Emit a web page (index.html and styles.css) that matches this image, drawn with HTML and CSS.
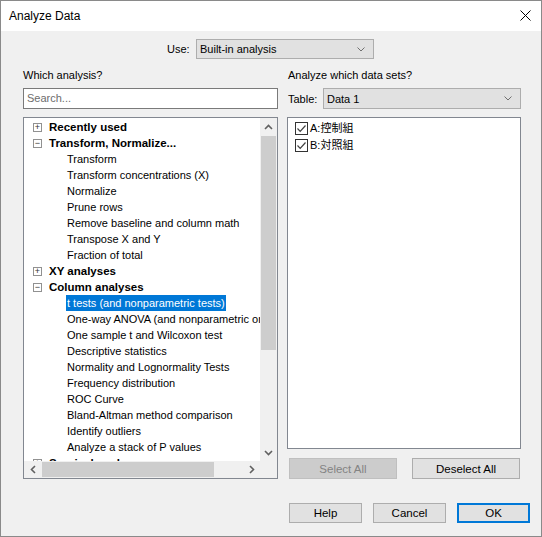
FILE: index.html
```html
<!DOCTYPE html>
<html>
<head>
<meta charset="utf-8">
<link rel="stylesheet" href="styles.css">
</head>
<body>
<div class="window">
  <div class="titlebar">
    <span class="title">Analyze Data</span>
    <svg class="close" width="11" height="11" viewBox="0 0 11 11"><path d="M0.5 0.5L10.5 10.5M10.5 0.5L0.5 10.5" stroke="#000" stroke-width="1"/></svg>
  </div>
  <div class="content">
    <div class="use-row">
      <span class="use-label">Use:</span>
      <div class="combo use-combo">
        <span>Built-in analysis</span>
        <svg class="chev" width="8" height="5" viewBox="0 0 8 5"><path d="M0.5 0.5L4 4L7.5 0.5" fill="none" stroke="#707070" stroke-width="1"/></svg>
      </div>
    </div>
    <div class="columns">
      <div class="col-left">
        <div class="label">Which analysis?</div>
        <div class="search">Search...</div>
        <div class="tree">
          <div class="tree-items">
            <div class="row head"><span class="exp">+</span>Recently used</div>
            <div class="row head"><span class="exp">−</span>Transform, Normalize...</div>
            <div class="row child"><span class="txt">Transform</span></div>
            <div class="row child"><span class="txt">Transform concentrations (X)</span></div>
            <div class="row child"><span class="txt">Normalize</span></div>
            <div class="row child"><span class="txt">Prune rows</span></div>
            <div class="row child"><span class="txt">Remove baseline and column math</span></div>
            <div class="row child"><span class="txt">Transpose X and Y</span></div>
            <div class="row child"><span class="txt">Fraction of total</span></div>
            <div class="row head"><span class="exp">+</span>XY analyses</div>
            <div class="row head"><span class="exp">−</span>Column analyses</div>
            <div class="row child"><span class="txt selected">t tests (and nonparametric tests)</span></div>
            <div class="row child"><span class="txt">One-way ANOVA (and nonparametric or mixed)</span></div>
            <div class="row child"><span class="txt">One sample t and Wilcoxon test</span></div>
            <div class="row child"><span class="txt">Descriptive statistics</span></div>
            <div class="row child"><span class="txt">Normality and Lognormality Tests</span></div>
            <div class="row child"><span class="txt">Frequency distribution</span></div>
            <div class="row child"><span class="txt">ROC Curve</span></div>
            <div class="row child"><span class="txt">Bland-Altman method comparison</span></div>
            <div class="row child"><span class="txt">Identify outliers</span></div>
            <div class="row child"><span class="txt">Analyze a stack of P values</span></div>
            <div class="row head"><span class="exp">+</span>Survival analyses</div>
          </div>
          <div class="vscroll">
            <div class="sbtn"><svg width="9" height="6" viewBox="0 0 9 6"><path d="M1 5L4.5 1.5L8 5" fill="none" stroke="#606060" stroke-width="1.6"/></svg></div>
            <div class="vtrack"><div class="vthumb"></div></div>
            <div class="sbtn"><svg width="9" height="6" viewBox="0 0 9 6"><path d="M1 1L4.5 4.5L8 1" fill="none" stroke="#606060" stroke-width="1.6"/></svg></div>
          </div>
          <div class="hscroll">
            <div class="sbtn"><svg width="6" height="9" viewBox="0 0 6 9"><path d="M5 1L1.5 4.5L5 8" fill="none" stroke="#606060" stroke-width="1.6"/></svg></div>
            <div class="htrack"><div class="hthumb"></div></div>
            <div class="sbtn"><svg width="6" height="9" viewBox="0 0 6 9"><path d="M1 1L4.5 4.5L1 8" fill="none" stroke="#606060" stroke-width="1.6"/></svg></div>
          </div>
          <div class="corner"></div>
        </div>
      </div>
      <div class="col-right">
        <div class="label rlabel">Analyze which data sets?</div>
        <div class="table-row">
          <span class="table-label">Table:</span>
          <div class="combo table-combo">
            <span>Data 1</span>
            <svg class="chev" width="8" height="5" viewBox="0 0 8 5"><path d="M0.5 0.5L4 4L7.5 0.5" fill="none" stroke="#707070" stroke-width="1"/></svg>
          </div>
        </div>
        <div class="list">
          <div class="check-row"><span class="cb"><svg width="11" height="11" viewBox="0 0 11 11"><path d="M1.5 5.5L4.2 8.3L9.5 2.5" fill="none" stroke="#404040" stroke-width="1.2"/></svg></span><span class="ctext">A:控制組</span></div>
          <div class="check-row"><span class="cb"><svg width="11" height="11" viewBox="0 0 11 11"><path d="M1.5 5.5L4.2 8.3L9.5 2.5" fill="none" stroke="#404040" stroke-width="1.2"/></svg></span><span class="ctext">B:対照組</span></div>
        </div>
        <div class="sel-buttons">
          <div class="btn disabled">Select All</div>
          <div class="btn">Deselect All</div>
        </div>
      </div>
    </div>
    <div class="footer">
      <div class="btn fbtn">Help</div>
      <div class="btn fbtn">Cancel</div>
      <div class="btn fbtn default">OK</div>
    </div>
  </div>
</div>
</body>
</html>
```
FILE: styles.css
```css
* { box-sizing: border-box; }
html, body { margin: 0; padding: 0; }
body {
  font-family: "Liberation Sans", Arial, sans-serif;
  font-size: 11px;
  color: #000;
  background: #f0f0f0;
}
.window {
  width: 542px;
  height: 537px;
  border: 1px solid #8a8a8a;
  background: #f0f0f0;
  display: flex;
  flex-direction: column;
}
.titlebar {
  height: 30px;
  background: #fff;
  display: flex;
  align-items: center;
  justify-content: space-between;
  padding: 0 10px 0 8px;
  flex-shrink: 0;
}
.title { font-size: 12px; }
.close { margin-top: -2px; }
.content {
  flex: 1;
  padding: 0 0 0 22px;
  display: flex;
  flex-direction: column;
}
.use-row {
  margin-top: 8px;
  padding-left: 144px;
  display: flex;
  align-items: center;
  height: 20px;
}
.use-label { width: 29px; }
.combo {
  background: #e1e1e1;
  border: 1px solid #adadad;
  display: flex;
  align-items: center;
  justify-content: space-between;
  padding: 0 8px 0 3px;
}
.use-combo { width: 178px; height: 20px; }
.columns {
  margin-top: 10px;
  display: flex;
  gap: 9px;
}
.col-left { width: 255px; display: flex; flex-direction: column; }
.col-right { width: 234px; display: flex; flex-direction: column; }
.label { height: 13px; line-height: 13px; }
.rlabel { padding-left: 1px; }
.search {
  margin-top: 6px;
  height: 21px;
  background: #fff;
  border: 1px solid #7a7a7a;
  padding-left: 3px;
  line-height: 19px;
  color: #6d6d6d;
}
.tree {
  margin-top: 8px;
  height: 362px;
  border: 1px solid #828790;
  background: #fff;
  display: grid;
  grid-template-columns: 1fr 17px;
  grid-template-rows: 1fr 17px;
}
.tree-items {
  overflow: hidden;
  padding-top: 1px;
  white-space: nowrap;
}
.row {
  height: 16px;
  line-height: 16px;
  display: flex;
  align-items: center;
}
.row.head { font-weight: bold; padding-left: 9px; font-size: 11.5px; }
.exp {
  width: 9px;
  height: 9px;
  border: 1px solid #919191;
  font-weight: normal;
  font-size: 9px;
  line-height: 7px;
  text-align: center;
  color: #333;
  margin-right: 7px;
  flex-shrink: 0;
  overflow: hidden;
}
.row.child { padding-left: 42px; }
.txt { padding: 0 1px; height: 16px; line-height: 16px; }
.txt.selected { background: #0078d7; color: #fff; }
.vscroll {
  background: #f0f0f0;
  display: flex;
  flex-direction: column;
}
.sbtn {
  width: 17px;
  height: 17px;
  display: flex;
  align-items: center;
  justify-content: center;
  flex-shrink: 0;
}
.vtrack { flex: 1; padding-top: 1px; }
.vthumb { height: 214px; background: #cdcdcd; margin: 0 1px; }
.hscroll {
  background: #f0f0f0;
  display: flex;
}
.htrack { flex: 1; padding: 1px 0; }
.hthumb { width: 172px; height: 15px; background: #cdcdcd; margin-left: 1px; }
.corner { background: #f0f0f0; }
.table-row {
  margin-top: 6px;
  display: flex;
  align-items: center;
  height: 21px;
}
.table-label { width: 36px; padding-left: 1px; }
.table-combo { flex: 1; height: 21px; }
.list {
  margin-top: 8px;
  height: 332px;
  background: #fff;
  border: 1px solid #828790;
  padding: 2px 0 0 7px;
}
.check-row {
  height: 17px;
  display: flex;
  align-items: center;
}
.cb {
  width: 13px;
  height: 13px;
  border: 1px solid #333;
  background: #fff;
  display: flex;
  align-items: center;
  justify-content: center;
  margin-right: 2px;
}
.ctext {
  font-family: "Liberation Sans", "Noto Sans CJK JP", sans-serif;
  font-size: 11px;
  line-height: 13px;
}
.sel-buttons {
  margin-top: 9px;
  display: flex;
  gap: 15px;
  padding-left: 2px;
}
.btn {
  height: 21px;
  width: 108px;
  background: #e1e1e1;
  border: 1px solid #adadad;
  display: flex;
  align-items: center;
  justify-content: center;
  font-size: 11.5px;
}
.btn.disabled {
  background: #cccccc;
  border-color: #bfbfbf;
  color: #838383;
}
.footer {
  margin-top: 24px;
  padding-left: 266px;
  display: flex;
  gap: 11px;
}
.fbtn { width: 73px; height: 20px; }
.fbtn.default { border: 2px solid #0078d7; }
```
